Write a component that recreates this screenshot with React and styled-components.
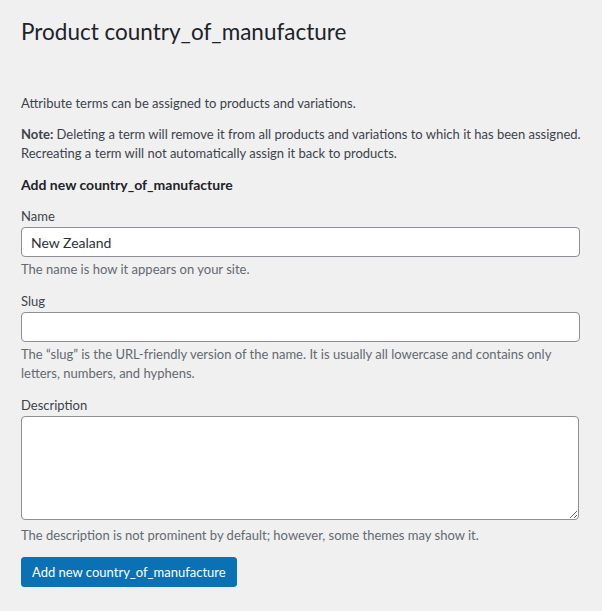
import React from 'react';
import styled, { createGlobalStyle } from 'styled-components';

const GlobalStyle = createGlobalStyle`
  html, body {
    margin: 0;
    padding: 0;
    background: #f0f0f1;
  }
  body {
    font-family: Lato, "Open Sans", sans-serif;
    font-size: 13px;
    color: #3c434a;
  }
`;

const Wrap = styled.div`
  width: 566px;
  padding: 8px 0 24px 21px;
`;

const Title = styled.h1`
  font-size: 22.5px;
  font-weight: 400;
  color: #1d2327;
  margin: 0;
  padding: 9px 0 4px;
  line-height: 1.3;
`;

const Intro = styled.p`
  margin: 44px 0 0;
  line-height: 19px;
`;

const Note = styled.p`
  margin: 12px 0 0;
  line-height: 19px;
  strong { font-weight: 700; }
`;

const FormTitle = styled.h2`
  font-size: 14px;
  font-weight: 700;
  color: #1d2327;
  margin: 12px 0 0;
  line-height: 19px;
`;

const Field = styled.div`
  margin-top: ${p => p.$gap || 13}px;
`;

const Label = styled.label`
  display: block;
  line-height: 19px;
  margin-bottom: 1px;
`;

const TextInput = styled.input`
  box-sizing: border-box;
  width: 559px;
  height: 30px;
  padding: 0 9px;
  border: 1px solid #8c8f94;
  border-radius: 4px;
  background: #fff;
  font: inherit;
  font-size: 14px;
  color: #2c3338;
  outline: none;
`;

const TextArea = styled.textarea`
  display: block;
  box-sizing: border-box;
  width: 558px;
  height: 104px;
  border: 1px solid #8c8f94;
  border-radius: 4px;
  background: #fff;
  font: inherit;
  outline: none;
`;

const Help = styled.p`
  margin: ${p => p.$gap || 3}px 0 0;
  color: #646970;
  line-height: 19px;
`;

const Button = styled.button`
  margin-top: 12px;
  height: 30px;
  padding: 0 10px;
  border: 1px solid #0a72b4;
  border-radius: 3px;
  background: #0a72b4;
  color: #fff;
  font: inherit;
  font-size: 13px;
  cursor: pointer;
`;

export default function App() {
  return (
    <>
      <GlobalStyle />
      <Wrap>
        <Title>Product country_of_manufacture</Title>
        <Intro>Attribute terms can be assigned to products and variations.</Intro>
        <Note>
          <strong>Note:</strong> Deleting a term will remove it from all products and variations to which it has been assigned. Recreating a term will not automatically assign it back to products.
        </Note>
        <FormTitle>Add new country_of_manufacture</FormTitle>
        <Field $gap={13}>
          <Label htmlFor="tag-name">Name</Label>
          <TextInput id="tag-name" defaultValue="New Zealand" />
          <Help>The name is how it appears on your site.</Help>
        </Field>
        <Field>
          <Label htmlFor="tag-slug">Slug</Label>
          <TextInput id="tag-slug" />
          <Help>The &ldquo;slug&rdquo; is the URL-friendly version of the name. It is usually all lowercase and contains only letters, numbers, and hyphens.</Help>
        </Field>
        <Field $gap={13}>
          <Label htmlFor="tag-description">Description</Label>
          <TextArea id="tag-description" />
          <Help $gap={6}>The description is not prominent by default; however, some themes may show it.</Help>
        </Field>
        <Button>Add new country_of_manufacture</Button>
      </Wrap>
    </>
  );
}
